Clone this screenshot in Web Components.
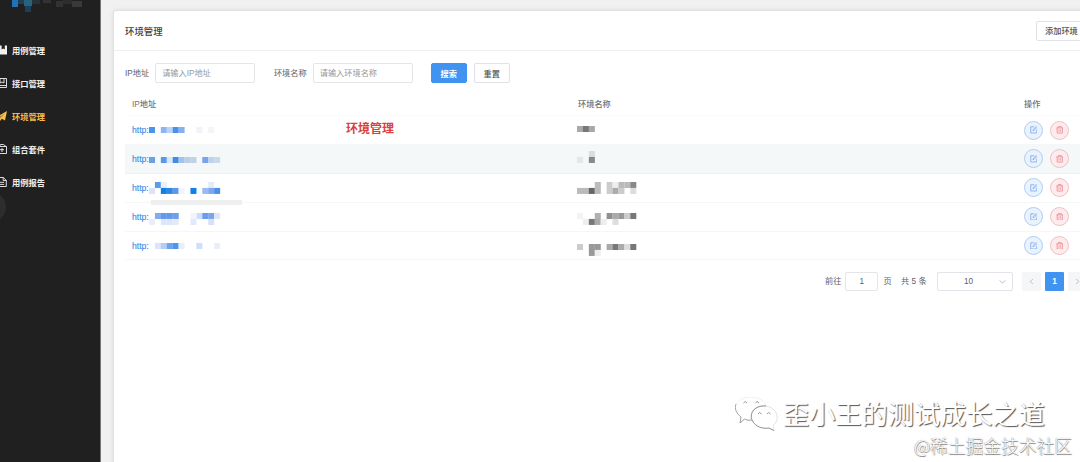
<!DOCTYPE html>
<html lang="zh-CN">
<head>
<meta charset="utf-8">
<title>环境管理</title>
<style>
html,body{margin:0;height:100%;overflow:hidden}
body{font-family:"Liberation Sans","Noto Sans CJK SC",sans-serif;font-size:8.2px;color:#606266;background:#f1f1f1}
</style>
</head>
<body>
<env-app></env-app>
<script>
function define(name, html, setup) {
  customElements.define(name, class extends HTMLElement {
    connectedCallback() {
      if (this.shadowRoot) return;
      const t = document.createElement('template');
      t.innerHTML = html;
      this.attachShadow({mode: 'open'}).appendChild(t.content.cloneNode(true));
      if (setup) setup(this, this.shadowRoot);
    }
  });
}

/* Redaction mosaic: data is "col,row,colour;..." on a 5.92px grid */
define('pixel-mosaic', `<style>:host{position:absolute;display:block}svg{display:block;overflow:visible;filter:blur(.35px)}</style><svg width="72" height="12"></svg>`, (h, r) => {
  const s = 5.92;
  r.querySelector('svg').innerHTML = (h.getAttribute('data') || '').split(';').filter(Boolean).map(c => {
    const [x, y, f] = c.split(',');
    return `<rect x="${x * s}" y="${y * s}" width="${s + .1}" height="${s + .1}" fill="${f}"/>`;
  }).join('');
});

const menuIcons = {
  book: '<path d="M0 .5H4.6V4.6L6.2 3.6L7.8 4.6V.5H10V9.5H0Z" fill="currentColor" stroke="none"/>',
  api: '<path d="M.5.5H9.5V9.5H.5ZM3 .5V5L5 4L7 5V.5M.5 7.5H9.5"/>',
  plane: '<path d="M0 5.6L10 0L8 9.5L4.8 7.7L3 10V6.8L7.6 2.6L2.2 6.5Z" fill="currentColor" stroke="none"/>',
  suite: '<path d="M.5 2.5H9.5V9.5H.5ZM2.5 2.5L3.5.5H6.5L9 2.5M5 4V8M3 5.7H7"/>',
  report: '<path d="M1 .5H6.3L9.3 3.4V9.5H1ZM6.2.5V3.5H9.3M3 5.3H7.2M3 7.4H7.2"/>'
};
define('menu-item', `<style>
:host{display:flex;align-items:center;height:33px;color:#f1f1f1;font-weight:700;font-size:8.25px;white-space:nowrap}
:host([active]){color:#f5bd4d}
svg{width:10px;height:10px;margin-left:-3px;margin-right:5px;flex:none;fill:none;stroke:currentColor;stroke-width:.9}
</style><svg viewBox="0 0 10 10"></svg><slot></slot>`, (h, r) => {
  r.querySelector('svg').innerHTML = menuIcons[h.getAttribute('icon')];
});

define('side-bar', `<style>
:host{display:block;width:100px;height:462px;background:#202020;border-right:1px solid #777;position:relative;overflow:hidden;flex:none}
nav{padding-top:33px}
.logo{position:absolute;left:0;top:0}
.knob{position:absolute;left:-23px;top:192px;width:29px;height:30px;border-radius:50%;background:#2d2d2d}
</style>
<svg class="logo" width="100" height="14"><g style="filter:blur(.6px)"><rect x="12" y="0" width="6" height="7" fill="#2173b5"/><rect x="18" y="0" width="6" height="4" fill="#203f54"/><rect x="24" y="0" width="8" height="6" fill="#28627c"/><rect x="25" y="6" width="6" height="6" fill="#1b4059"/><rect x="32" y="0" width="8" height="4" fill="#25323a"/><rect x="43" y="0" width="8" height="3" fill="#303234"/><rect x="56" y="1" width="7" height="6" fill="#323232"/><rect x="63" y="0" width="9" height="4" fill="#2d2d2d"/><rect x="72" y="1" width="10" height="6" fill="#393939"/></g></svg>
<div class="knob"></div>
<nav><menu-item icon="book">用例管理</menu-item><menu-item icon="api">接口管理</menu-item><menu-item icon="plane" active>环境管理</menu-item><menu-item icon="suite">组合套件</menu-item><menu-item icon="report">用例报告</menu-item></nav>`);

define('ui-button', `<style>
:host{display:flex;align-items:center;justify-content:center;box-sizing:border-box;width:36px;height:20px;border:1px solid #e0e2e6;border-radius:2px;background:#fff;color:#505256;font-weight:500;white-space:nowrap;flex:none;padding-bottom:1px}
:host([primary]){background:#4093f1;border-color:#4093f1;color:#fff;font-weight:700}
</style><slot></slot>`);

define('ui-input', `<style>
:host{display:flex;align-items:center;box-sizing:border-box;width:100px;height:20px;border:1px solid #e3e5e9;border-radius:2px;background:#fff;color:#96989c;padding:0 6px 2px;white-space:nowrap;flex:none}
</style><slot></slot>`);

define('round-action', `<style>
:host{display:flex;align-items:center;justify-content:center;box-sizing:border-box;width:19px;height:19px;border-radius:50%;border:1px solid #b0cdf4;background:#e9f2fd;color:#70a3e9}
:host([kind=delete]){border-color:#f3bdc2;background:#fdecee;color:#e8808a}
svg{width:7.5px;height:7.5px;fill:none;stroke:currentColor;stroke-width:1}
</style><svg viewBox="0 0 10 10"></svg>`, (h, r) => {
  r.querySelector('svg').innerHTML = h.getAttribute('kind') === 'delete'
    ? '<path d="M.5 2.5H9.5M3.2 2.3V.6H6.8V2.3M1.5 2.5V9.4H8.5V2.5M3.9 4.5V7.5M6.1 4.5V7.5"/>'
    : '<path d="M5.5 1H1V9.3H9V5M4 6.3L4.4 4.7L8.2.8L9.3 1.9L5.6 5.8Z"/>';
});

define('env-row', `<style>
:host{display:grid;grid-template-columns:446px 446px 1fr;box-sizing:border-box;height:28.9px;border-bottom:1px solid #f5f6f8;align-items:center}
:host([hover]){background:#f4f8f9;border-color:#eaf1f4}
.c{padding-left:7px;position:relative;height:28px;display:flex;align-items:center}
.link{color:#3f8fe6;font-weight:500;font-size:8.6px;-webkit-text-stroke:.15px #3f8fe6}
.acts{gap:7px}
.m1{left:23.7px}.m2{left:5.7px}
</style>
<div class="c"><span class="link">http:</span><pixel-mosaic class="m1"></pixel-mosaic></div>
<div class="c"><pixel-mosaic class="m2"></pixel-mosaic></div>
<div class="c acts"><round-action></round-action><round-action kind="delete"></round-action></div>`, (h, r) => {
  const d = rows[h.getAttribute('index')];
  for (const [cls, data, y] of [['m1', d.a, d.ay], ['m2', d.b, d.by]]) {
    const m = document.createElement('pixel-mosaic');
    m.className = cls;
    m.setAttribute('data', data);
    m.style.top = y + 'px';
    r.querySelector('.' + cls).replaceWith(m);
  }
});

const rows = [
 {a:'0,0,#4a94ea;2,0,#8fb4f1;3,0,#bdd3f5;4,0,#4a8fe9;5,0,#85b0f2;8,0,#f2f2f8;10,0,#f5f5f8', ay:10.5, b:'0,0,#aaa;1,0,#777;2,0,#a8a8a8', by:10},
 {a:'0,0,#6b9fe6;2,0,#5b98e8;3,0,#d9e7f6;4,0,#3f8be5;5,0,#a5c3e8;6,0,#b9cfe6;7,0,#bfd3e6;9,0,#7ba2ea;10,0,#bcd3ea;11,0,#c7dae9', ay:12, b:'2,0,#ddd;0,1,#e5e6e8;2,1,#888', by:5.8, hover:1},
 {a:'1,0,#5b9de8;2,0,#e5f1fb;10,0,#e4ecfb;0,1,#dce4fa;2,1,#0f80e8;3,1,#2e87e8;4,1,#5c96ea;5,1,#f0f4fd;7,1,#0f80e8;9,1,#9bb9f3;10,1,#7ea7ef;11,1,#4a8fee', ay:8, b:'3,0,#bbb;5,0,#ccc;6,0,#eee;7,0,#bbb;8,0,#bbb;9,0,#888;0,1,#bbb;1,1,#bbb;2,1,#666;3,1,#bbb;5,1,#ccc;6,1,#aaa;7,1,#ccc;9,1,#ddd', by:7.8},
 {a:'1,0,#82acee;2,0,#6299ea;3,0,#6299ea;4,0,#6c9fec;8,0,#cddcf8;7,0,#f0f4fd;9,0,#6d9cec;10,0,#7aa4ed;11,0,#dde6fb;0,1,#e8ecfc;2,1,#dfe6fb;3,1,#dfe6fb;4,1,#e4eafb;7,1,#e2e9fc;10,1,#d5e0fa', ay:10, b:'0,0,#f3f3f3;3,0,#b0b0b0;5,0,#909090;6,0,#aaa;7,0,#999;8,0,#ccc;9,0,#777;1,1,#eee;2,1,#777;3,1,#aaa;4,1,#eee;6,1,#ddd', by:10.2},
 {a:'1,0,#dbe4f8;2,0,#b3cdf5;3,0,#6da3ee;4,0,#4f95ee;5,0,#e8effc;8,0,#cfdff9;11,0,#e9eefb', ay:11.6, b:'0,0,#ccc;2,0,#999;3,0,#999;5,0,#aaa;6,0,#777;7,0,#aaa;8,0,#ddd;9,0,#777;2,1,#999;3,1,#eee', by:12.2}
];
define('env-table', `<style>
:host{display:block;position:relative}
.head{display:grid;grid-template-columns:446px 446px 1fr;height:24px;align-items:center;font-weight:500;color:#707276;border-bottom:1px solid #fafbfc}
.head span{padding-left:7px}
.note{position:absolute;left:221px;top:29px;font-size:12px;line-height:18px;font-weight:700;color:#d9403c;white-space:nowrap}
.smudge{position:absolute;left:26px;top:109px;width:91px;height:5px;background:#efefef}
</style><div class="head"><span>IP地址</span><span>环境名称</span><span>操作</span></div><div class="body"></div><div class="note">环境管理</div><div class="smudge"></div>`, (h, r) => {
  r.querySelector('.body').innerHTML = rows.map((d, i) => `<env-row index="${i}"${d.hover ? ' hover' : ''}></env-row>`).join('');
});

define('page-bar', `<style>
:host{display:flex;align-items:center;height:20px;margin-top:11px;padding-left:700px;white-space:nowrap}
:host>span{padding-bottom:2px}
.num{box-sizing:border-box;width:33px;height:19px;border:1px solid #e3e5e9;border-radius:2px;display:flex;align-items:center;justify-content:center;margin:0 5px 0 4px}
.total{margin:0 9px 0 9.5px;width:27px}
.size{box-sizing:border-box;width:76px;height:19px;border:1px solid #e0e3e7;border-radius:2px;display:flex;align-items:center;justify-content:center;position:relative;padding-right:13px}
.size svg{position:absolute;right:6px;top:6px}
.p{width:19px;height:19px;background:#f5f6f8;border-radius:1px;display:flex;align-items:center;justify-content:center;margin-left:4px;flex:none}
.first{margin-left:9px}
.on{background:#4093f1;color:#fff;font-weight:700}
svg{fill:none;stroke:#b4b7bd;stroke-width:.9}
</style>
<span>前往</span><div class="num">1</div><span>页</span><span class="total">共 5 条</span>
<div class="size">10<svg width="7" height="6" viewBox="0 0 7 6"><path d="M.7 1.3L3.5 4.2L6.3 1.3"/></svg></div>
<div class="p first"><svg width="5" height="7"><path d="M3.8 1L1.3 3.5L3.8 6"/></svg></div><div class="p on">1</div><div class="p"><svg width="5" height="7"><path d="M1.2 1L3.7 3.5L1.2 6"/></svg></div>`);

define('env-card', `<style>
:host{display:block;box-sizing:border-box;margin:10px 0 0 12px;width:980px;height:470px;background:#fff;border:1px solid #e1e1e3;border-radius:3px 0 0 0;box-shadow:0 0 4px rgba(0,0,0,.09);flex:none}
header{display:flex;align-items:center;justify-content:space-between;height:40px;box-sizing:border-box;border-bottom:1px solid #eeeff1;padding-left:11px}
h1{margin:0;font-size:9.4px;font-weight:500;color:#3d3f43}
.add{width:56px;justify-content:flex-start;padding-left:8px}
.filters{display:flex;align-items:center;height:20px;padding:12px 0 0 11px;white-space:nowrap}
label{font-weight:400;color:#606266;padding-bottom:2px}
label+ui-input{margin-left:6px}
.l2{margin-left:18.8px}
.go{margin-left:18px}.reset{margin-left:7px}
env-table{margin:8px 0 0 11px}
page-bar{margin-left:11px}
</style>
<header><h1>环境管理</h1><ui-button class="add">添加环境</ui-button></header>
<div class="filters"><label>IP地址</label><ui-input>请输入IP地址</ui-input><label class="l2">环境名称</label><ui-input>请输入环境名称</ui-input><ui-button class="go" primary>搜索</ui-button><ui-button class="reset">重置</ui-button></div>
<env-table></env-table><page-bar></page-bar>`);

define('water-mark', `<style>
:host{position:absolute;left:735px;top:393px;display:block;width:345px;height:68px;color:#fff;white-space:nowrap}
.top{display:flex;align-items:center;height:40px;gap:5px}
svg{display:block;fill:#fff;stroke-width:.9;flex:none;position:relative;top:2px}
.name{font:400 26.2px/38px "Noto Sans CJK SC",sans-serif;text-shadow:1px 1px 1px #555}
.site{position:absolute;left:179px;top:39px;font:300 17.75px/26px "Noto Sans CJK SC",sans-serif;text-shadow:.7px .7px .8px #777,-.4px -.4px .8px #999}
</style>
<div class="top"><svg width="43" height="36" viewBox="0 0 43 36"><path d="M16 24Q12 24 9.500 22L5 26L6 20C-2 14 0 4 9 1C20 -2 30 3 31 9" stroke="#eee"/><path d="M1 7C-1 12 2 17 6 20L5 26L9.500 22Q13 24 17 23" stroke="#999"/><path d="M8.500 6q1.500-3 3.500 0M20.500 6q1.500-3 3.500 0" stroke="#888"/><path d="M38 29C46 22 42 11 31 9C20 7 14 16 17 23C20 30 28 32 34 31L39 34Z" stroke="#ddd"/><path d="M31 9C20 8 14 16 17 23C20 30 28 32 34 31L39 33.500" stroke="#888"/><path d="M23 17q1.500-3 3.500 0M32 17q1.500-3 3.500 0" stroke="#888"/></svg><span class="name">歪小王的测试成长之道</span></div>
<div class="site">@稀土掘金技术社区</div>`);

define('env-app', `<style>
:host{display:flex;position:relative;width:1080px;height:462px;overflow:hidden;background:#f1f1f1}
</style><side-bar></side-bar><env-card></env-card><water-mark></water-mark>`);
</script>
</body>
</html>
